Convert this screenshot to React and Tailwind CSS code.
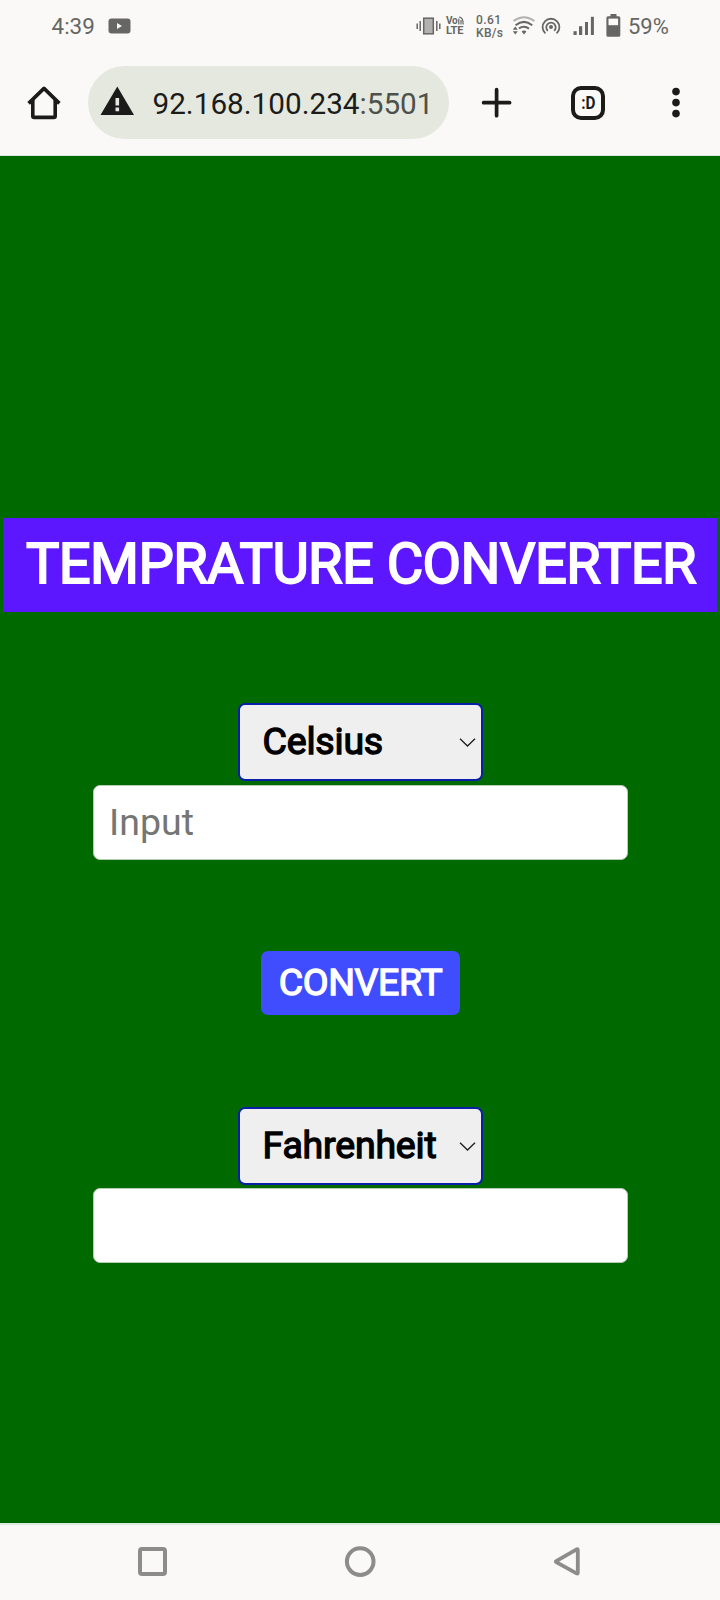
import React from "react";

function StatusBar() {
  return (
    <div className="flex h-[52px] items-center pl-[51px] text-[#666664]">
      <span className="w-[57px] pt-[1px] pl-[0.6px] text-[22.4px] leading-[51px]">4:39</span>
      <svg className="h-[16px] w-[23px]" viewBox="0 0 23 16">
        <rect x="0.5" y="0.5" width="22" height="15" rx="3" fill="currentColor" />
        <path d="M9 5v6l5-3z" fill="#faf9f7" />
      </svg>
      <svg className="ml-[285px] h-[20px] w-[25px]" viewBox="0 0 25 20" fill="none" stroke="currentColor">
        <rect x="7.7" y="2.2" width="9.6" height="15.6" fill="#b2b2b0" strokeWidth="1.5" />
        <path d="M4.2 5v10M1.2 7.5v5.5M20.8 5v10M23.8 7.5v5.5" strokeWidth="1.5" />
      </svg>
      <div className="ml-[5px] flex w-[19px] flex-col font-bold">
        <span className="flex h-[10px] items-end">
          <span className="text-[10px] leading-[9px] tracking-[-0.2px]">Vo</span>
          <svg className="h-[9px] w-[6px]" viewBox="0 0 6 9" fill="none" stroke="currentColor" strokeWidth="1.2">
            <path d="M0.8 2.5v6M1 1Q5.2 1 5.2 8.5M3 4v4.5" />
          </svg>
        </span>
        <span className="text-[11px] leading-[12px] tracking-[-0.2px]">LTE</span>
      </div>
      <div className="ml-[11px] flex w-[36px] flex-col pt-[1px] text-[12px] leading-[13px] font-medium">
        <span className="tracking-[0.4px]">0.61</span>
        <span className="tracking-[0.3px]">KB/s</span>
      </div>
      <svg className="h-[20px] w-[24px]" viewBox="0 0 24 20" fill="none" stroke="currentColor" strokeWidth="2">
        <path d="M1.5 5Q12 -2.6 22.5 5" stroke="#b2b2b0" />
        <path d="M3.6 9.2Q12 2.6 20.2 9.2" />
        <path d="M7 12.4Q12 9 17 12.6" />
        <path d="M12 18.6l-2.4-3.2q2.4-1.6 4.8 0z" fill="currentColor" stroke="none" />
        <path d="M3.3 10.4l2.5 3.4h-5zM3.3 18.6l2.5-3.4h-5z" fill="currentColor" stroke="none" />
      </svg>
      <svg className="ml-[5px] h-[20px] w-[20px]" viewBox="0 0 20 20" fill="none" stroke="currentColor" strokeWidth="1.8">
        <circle cx="10" cy="11" r="2" fill="currentColor" stroke="none" />
        <path d="M4.4 17.4A8.4 8.4 0 1 1 15.6 17.4" />
        <path d="M6.9 14.8A4.7 4.7 0 1 1 13.1 14.8" />
      </svg>
      <svg className="ml-[12px] h-[20px] w-[22px]" viewBox="0 0 22 20" fill="currentColor">
        <rect x="0.5" y="15.2" width="3.2" height="3.8" />
        <rect x="6" y="10.2" width="3.2" height="8.8" />
        <rect x="12" y="6" width="3" height="13" />
        <rect x="17.9" y="0.8" width="3" height="18.2" />
      </svg>
      <svg className="ml-[11px] h-[24px] w-[15px]" viewBox="0 0 15 24" fill="currentColor">
        <path d="M4.5 0h6v2.2h2.2q1.6 0 1.6 1.6v17.4q0 1.6-1.6 1.6H2q-1.6 0-1.6-1.6V3.8Q.4 2.2 2 2.2h2.5z" />
        <rect x="2.5" y="4.6" width="9.6" height="6.6" fill="#faf9f7" />
      </svg>
      <span className="ml-[7px] pt-[1px] text-[22px] leading-[51px]">59%</span>
    </div>
  );
}

function BrowserBar() {
  return (
    <div className="flex h-[103px] items-start pt-[14px] pl-[26px] text-[#1b1c1a]">
      <svg className="mt-[18px] h-[38px] w-[36px]" viewBox="0 0 36 38" fill="none" stroke="currentColor" strokeWidth="3.6" strokeLinejoin="round">
        <path d="M2.6 19.4L18 4.4L33.4 19.4" />
        <path d="M6.8 16v16q0 1.4 1.4 1.4h19.6q1.4 0 1.4-1.4V16" />
      </svg>
      <div className="ml-[26px] flex h-[73px] w-[361px] items-center rounded-full bg-[#e4e8df] pl-[12px]">
        <svg className="-mt-[3px] h-[30px] w-[35px]" viewBox="0 0 35 30">
          <path d="M17.3 0.6L34 29H0.5z" fill="currentColor" />
          <path d="M17.3 12v7.6M17.3 21.6v3.7" stroke="#e4e8df" strokeWidth="3.6" />
        </svg>
        <span className="ml-[17.5px] pt-[2px] text-[29.7px] leading-[71px] whitespace-nowrap">
          92.168.100.234<span className="text-[#4d504b]">:5501</span>
        </span>
      </div>
      <svg className="ml-[32px] mt-[21px] h-[31px] w-[31px]" viewBox="0 0 31 31" fill="none" stroke="currentColor" strokeWidth="3.7" strokeLinecap="round">
        <path d="M15.6 2.7v26M2.6 15.7h26" />
      </svg>
      <div className="ml-[59px] mt-[20px] flex h-[34px] w-[34px] items-center justify-center rounded-[10px] border-[4px] border-[#1b1c1a] text-[18px] leading-[26px] font-bold">
        <span className="inline-block -translate-y-[0.5px] scale-x-85">:D</span>
      </div>
      <svg className="ml-[66px] mt-[20px] h-[34px] w-[10px]" viewBox="0 0 10 34" fill="currentColor">
        <circle cx="5" cy="5.6" r="3.8" />
        <circle cx="5" cy="16.6" r="3.8" />
        <circle cx="5" cy="27.6" r="3.8" />
      </svg>
    </div>
  );
}

function UnitSelect({ value }) {
  return (
    <button className="ml-px flex h-[78px] w-[245px] items-center justify-between rounded-[7px] border-2 border-[#0a1fa8] bg-[#efefef] pr-[5px] pl-[22.5px] text-[37.5px] leading-none text-black">
      <span className="tracking-[-0.2px] [-webkit-text-stroke:1.3px_#000]">{value}</span>
      <svg className="h-[10px] w-[17px]" viewBox="0 0 17 10" fill="none" stroke="#222" strokeWidth="1.4">
        <path d="M1 1.8L8.5 9L16 1.8" />
      </svg>
    </button>
  );
}

function Field({ placeholder }) {
  return (
    <div className="flex h-[75px] w-[535px] items-center rounded-[7px] border border-[#b5cdb5] bg-white pl-[15.5px] text-[37.5px] leading-none text-[#757575]">
      {placeholder}
    </div>
  );
}

export default function App() {
  return (
    <div className="flex h-[1600px] w-[720px] flex-col overflow-hidden bg-[#faf9f7] font-['Roboto',sans-serif]">
      <StatusBar />
      <BrowserBar />
      <main className="flex h-[1368px] flex-col items-center border-t border-[#dfe8dd] bg-[#006a00]">
        <h1 className="mt-[362px] flex h-[94px] w-[714px] items-center justify-center bg-[#5c17ff] pb-[2px] pl-[2px] text-[56px] leading-none tracking-[-0.57px] whitespace-nowrap text-white [-webkit-text-stroke:1.9px_#fff]">
          TEMPRATURE CONVERTER
        </h1>
        <div className="mt-[91px] flex flex-col items-center gap-[4px]">
          <UnitSelect value="Celsius" />
          <Field placeholder="Input" />
        </div>
        <button className="mt-[91px] flex h-[64px] w-[199px] items-center justify-center rounded-[7px] bg-[#404dff] pl-[1px] text-[37.5px] leading-none tracking-[-0.4px] text-white [-webkit-text-stroke:1.3px_#fff]">
          CONVERT
        </button>
        <div className="mt-[92px] flex flex-col items-center gap-[3px]">
          <UnitSelect value="Fahrenheit" />
          <Field placeholder="" />
        </div>
      </main>
      <nav className="flex h-[77px] items-center border-t-2 border-[#dcebe0] pb-[2px] pl-[137px] text-[#8c8c8a]">
        <svg className="h-[32px] w-[31px]" viewBox="0 0 31 32" fill="none" stroke="currentColor" strokeWidth="4">
          <rect x="3" y="3" width="25" height="25" rx="2" />
        </svg>
        <svg className="ml-[176px] h-[32px] w-[32px]" viewBox="0 0 32 32" fill="none" stroke="currentColor" strokeWidth="4">
          <circle cx="16.2" cy="15.6" r="13.3" />
        </svg>
        <svg className="ml-[176px] h-[32px] w-[30px]" viewBox="0 0 30 32" fill="none" stroke="currentColor" strokeWidth="3.8" strokeLinejoin="round">
          <path d="M4.2 15.1L24.6 3.3q1.2-.6 1.2.6v22.8q0 1.2-1.2.6L4.2 16.1q-.8-.5 0-1z" />
        </svg>
      </nav>
    </div>
  );
}
